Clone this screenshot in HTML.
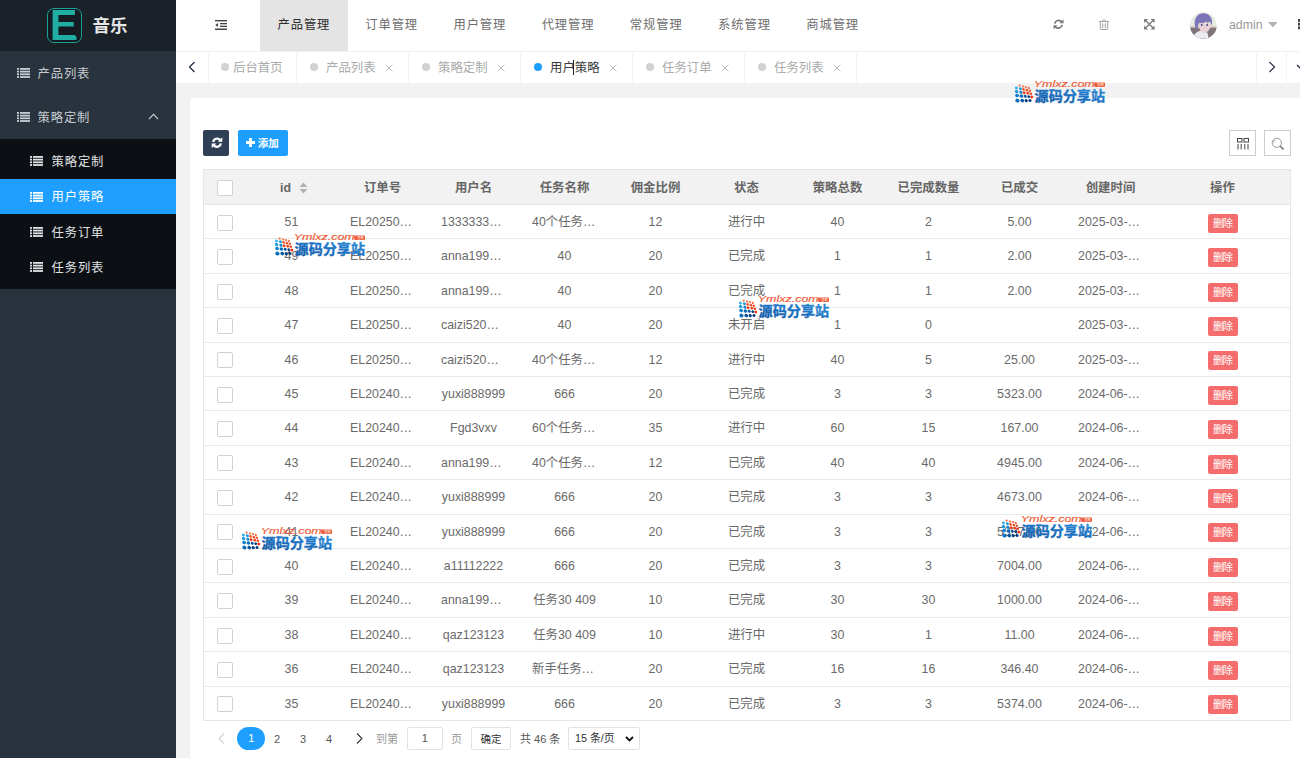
<!DOCTYPE html>
<html lang="zh-CN"><head><meta charset="utf-8"><title>音乐</title>
<style>
*{box-sizing:border-box;margin:0;padding:0}
html,body{width:1300px;height:758px;overflow:hidden;background:#f2f2f2;font-family:"Liberation Sans","Noto Sans CJK SC",sans-serif;font-size:12px;color:#666}
.abs{position:absolute}
#side{position:absolute;left:0;top:0;width:176px;height:758px;background:#28333e}
#logo{position:absolute;left:0;top:0;width:176px;height:51px;background:#1b2129}
#logo .e{position:absolute;left:47px;top:7.5px;width:35.2px;height:35.6px;border:1.2px solid #1aa094;border-radius:7px;background:#151b22}
#logo .t{position:absolute;left:92.5px;top:0;height:51px;line-height:52.5px;font-size:17.5px;font-weight:bold;color:#e6e6e6;letter-spacing:0}
.mi{position:absolute;left:0;width:176px;color:#c8cdd2;font-size:12.3px;letter-spacing:0.9px}
.mi .ic{position:absolute;top:50%;margin-top:-5px}
.mi span{position:absolute;top:0}
#sub{position:absolute;left:0;top:139px;width:176px;height:150px;background:#0c0f13}
#hdr{position:absolute;left:176px;top:0;width:1124px;height:52px;background:#fff;border-bottom:1px solid #f0f0f0}
.nav{position:absolute;top:0;height:51px;line-height:50px;width:88px;text-align:center;font-size:12.3px;letter-spacing:0.9px;text-indent:0.9px;color:#6e6e6e}
.nav.on{background:#e4e4e4;color:#2c2c2c;width:88.3px;text-indent:0.2px}
#tabs{position:absolute;left:176px;top:51px;width:1124px;height:32px;background:#fff;border-top:1px solid #f0f0f0}
.tab{position:absolute;top:-1px;height:32px;line-height:35px;border-right:1px solid #f4f4f4;color:#aaa;font-size:12.4px}
.tab .d{position:absolute;top:12.3px;width:8px;height:8px;border-radius:50%;background:#d2d2d2}
.tab .x{position:absolute;top:0;font-size:13px;color:#bbb}
#card{position:absolute;left:190px;top:98px;width:1120px;height:670px;background:#fff;border-radius:3px}
#tbl{position:absolute;left:203px;top:169px;width:1088px;height:552px;border:1px solid #e6e6e6;background:#fff}
#th{position:absolute;left:0;top:0;width:1086px;height:35px;background:#f2f2f2;border-bottom:1px solid #e6e6e6}
.c{position:absolute;width:91px;text-align:center;white-space:nowrap;font-size:12.4px;color:#6a6a6a}
.h{font-weight:bold;color:#666}
.cb{position:absolute;left:217px;width:16px;height:16px;border:1px solid #d2d2d2;border-radius:2px;background:#fff}
.ln{position:absolute;left:204px;width:1086px;height:1px;background:#e9e9e9}
.del{position:absolute;left:1208px;width:30px;height:19px;background:#f56c6c;border-radius:2px;color:#fff;font-size:10.5px;line-height:19px;text-align:center;letter-spacing:-1px;text-indent:-1px}
.wm{position:absolute;width:94px;height:26px}
</style></head><body>
<div id="side"><div id="logo"><div class="e"><svg width="33" height="33" viewBox="0 0 33 33" style="position:absolute;left:0.3px;top:0.3px"><path d="M4.6 1h22.3v5h-16.5v6.9h15.3v4.6h-15.3v8.5h16.5l1.6 2v3h-23.9z" fill="#20aea3"/></svg></div><div class="t">音乐</div></div><div class="mi" style="top:51px;height:44px;line-height:47px"><svg class="ic" style="left:17px" width="13" height="10" viewBox="0 0 13 10"><g fill="#c8cdd2"><rect x="0" y="0" width="2" height="1.8"/><rect x="3" y="0" width="10" height="1.8"/><rect x="0" y="2.7" width="2" height="1.8"/><rect x="3" y="2.7" width="10" height="1.8"/><rect x="0" y="5.4" width="2" height="1.8"/><rect x="3" y="5.4" width="10" height="1.8"/><rect x="0" y="8.1" width="2" height="1.8"/><rect x="3" y="8.1" width="10" height="1.8"/></g></svg><span style="left:37.5px">产品列表</span></div><div class="mi" style="top:95px;height:44px;line-height:47px"><svg class="ic" style="left:17px" width="13" height="10" viewBox="0 0 13 10"><g fill="#c8cdd2"><rect x="0" y="0" width="2" height="1.8"/><rect x="3" y="0" width="10" height="1.8"/><rect x="0" y="2.7" width="2" height="1.8"/><rect x="3" y="2.7" width="10" height="1.8"/><rect x="0" y="5.4" width="2" height="1.8"/><rect x="3" y="5.4" width="10" height="1.8"/><rect x="0" y="8.1" width="2" height="1.8"/><rect x="3" y="8.1" width="10" height="1.8"/></g></svg><span style="left:37.5px">策略定制</span><svg style="position:absolute;left:148px;top:18px" width="11" height="7" viewBox="0 0 11 7"><path d="M1 6L5.5 1.3 10 6" fill="none" stroke="#c8cdd2" stroke-width="1.1"/></svg></div><div id="sub"></div><div class="mi" style="top:143.7px;height:35.3px;line-height:37.4px;color:#e0e3e6;"><svg class="ic" style="left:30px" width="13" height="10" viewBox="0 0 13 10"><g fill="#e0e3e6"><rect x="0" y="0" width="2" height="1.8"/><rect x="3" y="0" width="10" height="1.8"/><rect x="0" y="2.7" width="2" height="1.8"/><rect x="3" y="2.7" width="10" height="1.8"/><rect x="0" y="5.4" width="2" height="1.8"/><rect x="3" y="5.4" width="10" height="1.8"/><rect x="0" y="8.1" width="2" height="1.8"/><rect x="3" y="8.1" width="10" height="1.8"/></g></svg><span style="left:51.5px;top:0px">策略定制</span></div><div class="mi" style="top:179px;height:35.3px;line-height:37.4px;background:#1e9fff;color:#fff;"><svg class="ic" style="left:30px" width="13" height="10" viewBox="0 0 13 10"><g fill="#fff"><rect x="0" y="0" width="2" height="1.8"/><rect x="3" y="0" width="10" height="1.8"/><rect x="0" y="2.7" width="2" height="1.8"/><rect x="3" y="2.7" width="10" height="1.8"/><rect x="0" y="5.4" width="2" height="1.8"/><rect x="3" y="5.4" width="10" height="1.8"/><rect x="0" y="8.1" width="2" height="1.8"/><rect x="3" y="8.1" width="10" height="1.8"/></g></svg><span style="left:51.5px;top:0.2px">用户策略</span></div><div class="mi" style="top:214.3px;height:35.3px;line-height:37.4px;color:#e0e3e6;"><svg class="ic" style="left:30px" width="13" height="10" viewBox="0 0 13 10"><g fill="#e0e3e6"><rect x="0" y="0" width="2" height="1.8"/><rect x="3" y="0" width="10" height="1.8"/><rect x="0" y="2.7" width="2" height="1.8"/><rect x="3" y="2.7" width="10" height="1.8"/><rect x="0" y="5.4" width="2" height="1.8"/><rect x="3" y="5.4" width="10" height="1.8"/><rect x="0" y="8.1" width="2" height="1.8"/><rect x="3" y="8.1" width="10" height="1.8"/></g></svg><span style="left:51.5px;top:0.6px">任务订单</span></div><div class="mi" style="top:249.6px;height:35.3px;line-height:37.4px;color:#e0e3e6;"><svg class="ic" style="left:30px" width="13" height="10" viewBox="0 0 13 10"><g fill="#e0e3e6"><rect x="0" y="0" width="2" height="1.8"/><rect x="3" y="0" width="10" height="1.8"/><rect x="0" y="2.7" width="2" height="1.8"/><rect x="3" y="2.7" width="10" height="1.8"/><rect x="0" y="5.4" width="2" height="1.8"/><rect x="3" y="5.4" width="10" height="1.8"/><rect x="0" y="8.1" width="2" height="1.8"/><rect x="3" y="8.1" width="10" height="1.8"/></g></svg><span style="left:51.5px;top:0.4px">任务列表</span></div></div><div id="hdr"><svg class="abs" style="left:38.5px;top:20px" width="12.5" height="10" viewBox="0 0 12.5 10"><g fill="#444"><rect x="0" y="0" width="12.5" height="1.4"/><rect x="5" y="3" width="7.5" height="1.3"/><rect x="5" y="5.7" width="7.5" height="1.3"/><rect x="0" y="8.5" width="12.5" height="1.5"/><path d="M3 3v4L0.3 5z"/></g></svg><div class="nav on" style="left:83.69999999999999px">产品管理</div><div class="nav" style="left:171.2px">订单管理</div><div class="nav" style="left:259.4px">用户管理</div><div class="nav" style="left:347.6px">代理管理</div><div class="nav" style="left:435.79999999999995px">常规管理</div><div class="nav" style="left:524.0px">系统管理</div><div class="nav" style="left:612.2px">商城管理</div><svg class="abs" style="left:877px;top:19.3px" width="11" height="10.5" viewBox="0 0 14 13.3"><g fill="none" stroke="#777" stroke-width="2.1"><path d="M2.3 5.8A4.9 4.9 0 0 1 11 3.6"/><path d="M11.7 7.5A4.9 4.9 0 0 1 3 9.7"/></g><path d="M13.4 0.3v5.2H8.2z" fill="#777"/><path d="M0.6 13V7.8h5.2z" fill="#777"/></svg><svg class="abs" style="left:923px;top:19px" width="10" height="11" viewBox="0 0 10 11"><g fill="none" stroke="#999" stroke-width="0.9"><path d="M0 2.5h10M3.2 2.3C3.2 0.3 6.8 0.3 6.8 2.3M1.3 2.7v7.1q0 0.7 0.7 0.7h6q0.7 0 0.7-0.7V2.7"/><path d="M3.7 4.5v4.3M6.3 4.5v4.3" stroke-width="1"/></g></svg><svg class="abs" style="left:968px;top:19.3px" width="10.7" height="10.5" viewBox="0 0 11 11"><g fill="#777"><path d="M0 0h4.2L0 4.2zM11 0v4.2L6.8 0zM0 11V6.8L4.2 11zM11 11H6.8L11 6.8z"/></g><path d="M1.5 1.5l8 8M9.5 1.5l-8 8" stroke="#808080" stroke-width="1.5" fill="none"/></svg><svg class="abs" style="left:1014.1px;top:12px" width="26.8" height="26.8" viewBox="0 0 27 27"><defs><clipPath id="av"><circle cx="13.5" cy="13.5" r="13.5"/></clipPath></defs><g clip-path="url(#av)"><rect width="27" height="27" fill="#e6ebe2"/><rect x="0" y="15.5" width="27" height="12" fill="#7f7479"/><rect x="0" y="14.6" width="27" height="1.2" fill="#c9b9a6"/><path d="M3 27C4 21 8 19.5 11 19l6 1.5c1.5 2 1.5 4 1.2 6.5z" fill="#ecebf2"/><path d="M8.5 11c0 5 2 9.5 6 10.2 3.5-0.5 6.5-4 6.5-10z" fill="#e8d2d8"/><path d="M5 14C3.5 6 8 1.2 13.5 1.2S23.5 5 22 13.5c-0.8-1.5-1.5-3-2-4-1 1-2 1.5-3 1.5l-0.5-1.5c-2 1.5-5 2-7.5 1.5-0.5 2-1.5 4.5-2 6.5-1-0.5-1.8-1.8-2-3.5z" fill="#7c75b8"/><ellipse cx="11.8" cy="13" rx="0.9" ry="1.2" fill="#5a548f"/><ellipse cx="17.3" cy="13" rx="0.9" ry="1.2" fill="#5a548f"/></g></svg><div class="abs" style="left:1053px;top:0;height:51px;line-height:51px;font-size:12.3px;color:#999">admin</div><svg class="abs" style="left:1091.7px;top:22px" width="9.7" height="5.4" viewBox="0 0 10 5.5"><path d="M0 0h10L5 5.5z" fill="#b2b2b2"/></svg><svg class="abs" style="left:1121.7px;top:19px" width="4" height="12" viewBox="0 0 4 12"><g fill="#444"><rect x="0" y="0" width="4" height="2.8"/><rect x="0" y="3.7" width="4" height="2.8"/><rect x="0" y="7.4" width="4" height="2.8"/></g></svg></div><div id="tabs"><div class="abs" style="left:0;top:-1px;width:32.5px;height:32px;border-right:1px solid #f4f4f4"></div><svg class="abs" style="left:12px;top:9px" width="8" height="12" viewBox="0 0 8 12"><path d="M6.5 1L1.5 6l5 5" fill="none" stroke="#1c2540" stroke-width="1.2"/></svg><div class="tab" style="left:32px;width:88.5px"><i class="d" style="left:13px"></i><span class="abs" style="left:25px">后台首页</span></div><div class="tab" style="left:120px;width:112.5px;"><i class="d" style="left:14px;"></i><span class="abs" style="left:30px">产品列表</span><svg class="abs" style="left:88.5px;top:13px" width="8" height="8" viewBox="0 0 8 8"><path d="M0.7 0.7l6.6 6.6M7.3 0.7L0.7 7.3" stroke="#bbb" stroke-width="0.9" fill="none"/></svg></div><div class="tab" style="left:232px;width:112.5px;"><i class="d" style="left:14px;"></i><span class="abs" style="left:30px">策略定制</span><svg class="abs" style="left:88.5px;top:13px" width="8" height="8" viewBox="0 0 8 8"><path d="M0.7 0.7l6.6 6.6M7.3 0.7L0.7 7.3" stroke="#bbb" stroke-width="0.9" fill="none"/></svg></div><div class="tab" style="left:344px;width:112.5px;color:#3a3a3a;"><i class="d" style="left:14px;background:#1e9fff;"></i><span class="abs" style="left:30px">用户策略</span><svg class="abs" style="left:88.5px;top:13px" width="8" height="8" viewBox="0 0 8 8"><path d="M0.7 0.7l6.6 6.6M7.3 0.7L0.7 7.3" stroke="#bbb" stroke-width="0.9" fill="none"/></svg></div><div class="tab" style="left:456px;width:112.5px;"><i class="d" style="left:14px;"></i><span class="abs" style="left:30px">任务订单</span><svg class="abs" style="left:88.5px;top:13px" width="8" height="8" viewBox="0 0 8 8"><path d="M0.7 0.7l6.6 6.6M7.3 0.7L0.7 7.3" stroke="#bbb" stroke-width="0.9" fill="none"/></svg></div><div class="tab" style="left:568px;width:112.5px;"><i class="d" style="left:14px;"></i><span class="abs" style="left:30px">任务列表</span><svg class="abs" style="left:88.5px;top:13px" width="8" height="8" viewBox="0 0 8 8"><path d="M0.7 0.7l6.6 6.6M7.3 0.7L0.7 7.3" stroke="#bbb" stroke-width="0.9" fill="none"/></svg></div><div class="abs" style="left:397.4px;top:8px;width:1px;height:15px;background:#222"></div><div class="abs" style="left:1079.7px;top:-1px;width:31.8px;height:32px;border-left:1px solid #f4f4f4;border-right:1px solid #f4f4f4"></div><svg class="abs" style="left:1092px;top:9px" width="8" height="12" viewBox="0 0 8 12"><path d="M1.5 1l5 5-5 5" fill="none" stroke="#1c2540" stroke-width="1.2"/></svg><svg class="abs" style="left:1120px;top:12px" width="10" height="7" viewBox="0 0 10 7"><path d="M1 1l4.5 4.5L10 1" fill="none" stroke="#1c2540" stroke-width="1.2"/></svg></div><div id="card"></div><div class="abs" style="left:203px;top:130px;width:26px;height:26px;background:#2f4056;border-radius:2px"><svg class="abs" style="left:7.7px;top:7px" width="12" height="11.4" viewBox="0 0 14 13.3"><g fill="none" stroke="#fff" stroke-width="2.6"><path d="M2.5 5.8A4.7 4.7 0 0 1 10.8 3.6"/><path d="M11.5 7.5A4.7 4.7 0 0 1 3.2 9.7"/></g><path d="M13.2 0.2v5.4H7.8z" fill="#fff"/><path d="M0.8 13.1V7.7h5.4z" fill="#fff"/></svg></div><div class="abs" style="left:237.5px;top:130px;width:50.3px;height:26px;background:#1e9fff;border-radius:2px;color:#fff;font-size:10.5px;line-height:25px;font-weight:bold"><svg class="abs" style="left:8.4px;top:8.1px" width="9" height="9" viewBox="0 0 9 9"><path d="M3.1 0h2.8v3.1H9v2.8H5.9V9H3.1V5.9H0V3.1h3.1z" fill="#fff"/></svg><span class="abs" style="left:20.3px;top:0.5px">添加</span></div><div class="abs" style="left:1229px;top:130px;width:26.5px;height:26px;border:1px solid #ccc;background:#fff"><svg class="abs" style="left:7px;top:6.5px" width="12" height="12" viewBox="0 0 12 12"><g fill="none" stroke="#444" stroke-width="1"><rect x="0.5" y="0.5" width="4.5" height="3.5"/><rect x="7" y="0.5" width="4.5" height="3.5"/><path d="M1 6v5.5M4.2 6v5.5M7.8 6v5.5M11 6v5.5"/></g></svg></div><div class="abs" style="left:1264.3px;top:130px;width:26.5px;height:26px;border:1px solid #ccc;background:#fff"><svg class="abs" style="left:6px;top:6px" width="14" height="14" viewBox="0 0 14 14"><g fill="none" stroke="#999" stroke-width="1"><circle cx="5.8" cy="5.8" r="4.6"/><path d="M2.6 5.8a3.2 3.2 0 0 1 1.5-2.7" stroke-width="0.8"/><path d="M9.2 9.2l3.3 3.3" stroke-width="1.8" stroke="#888"/></g></svg></div><div id="tbl"><div id="th"></div></div><div class="cb" style="top:180px"></div><div class="c h" style="left:240.0px;top:170.5px;height:35px;line-height:35px">id</div><svg class="abs" style="left:299px;top:182px" width="9" height="12" viewBox="0 0 9 12"><path d="M0.5 5L4.5 0.5 8.5 5z" fill="#b2b2b2"/><path d="M0.5 7L4.5 11.5 8.5 7z" fill="#b2b2b2"/></svg><div class="c h" style="left:337.0px;top:170.5px;height:35px;line-height:35px">订单号</div><div class="c h" style="left:428.0px;top:170.5px;height:35px;line-height:35px">用户名</div><div class="c h" style="left:519.0px;top:170.5px;height:35px;line-height:35px">任务名称</div><div class="c h" style="left:610.0px;top:170.5px;height:35px;line-height:35px">佣金比例</div><div class="c h" style="left:701.0px;top:170.5px;height:35px;line-height:35px">状态</div><div class="c h" style="left:792.0px;top:170.5px;height:35px;line-height:35px">策略总数</div><div class="c h" style="left:883.0px;top:170.5px;height:35px;line-height:35px">已完成数量</div><div class="c h" style="left:974.0px;top:170.5px;height:35px;line-height:35px">已成交</div><div class="c h" style="left:1065.0px;top:170.5px;height:35px;line-height:35px">创建时间</div><div class="c h" style="left:1177.0px;top:170.5px;height:35px;line-height:35px">操作</div><div class="cb" style="top:215px"></div><div class="c" style="left:246.0px;top:204.95px;height:34.4px;line-height:34.4px">51</div><div class="c" style="left:350.0px;text-align:left;top:204.95px;height:34.4px;line-height:34.4px">EL20250…</div><div class="c" style="left:441.0px;text-align:left;top:204.95px;height:34.4px;line-height:34.4px">1333333…</div><div class="c" style="left:532.0px;text-align:left;top:204.95px;height:34.4px;line-height:34.4px">40个任务…</div><div class="c" style="left:610.0px;top:204.95px;height:34.4px;line-height:34.4px">12</div><div class="c" style="left:701.0px;top:204.95px;height:34.4px;line-height:34.4px">进行中</div><div class="c" style="left:792.0px;top:204.95px;height:34.4px;line-height:34.4px">40</div><div class="c" style="left:883.0px;top:204.95px;height:34.4px;line-height:34.4px">2</div><div class="c" style="left:974.0px;top:204.95px;height:34.4px;line-height:34.4px">5.00</div><div class="c" style="left:1078.0px;text-align:left;top:204.95px;height:34.4px;line-height:34.4px">2025-03-…</div><div class="del" style="top:213.8px">删除</div><div class="ln" style="top:238px"></div><div class="cb" style="top:249px"></div><div class="c" style="left:246.0px;top:239.35px;height:34.4px;line-height:34.4px">49</div><div class="c" style="left:350.0px;text-align:left;top:239.35px;height:34.4px;line-height:34.4px">EL20250…</div><div class="c" style="left:441.0px;text-align:left;top:239.35px;height:34.4px;line-height:34.4px">anna199…</div><div class="c" style="left:519.0px;top:239.35px;height:34.4px;line-height:34.4px">40</div><div class="c" style="left:610.0px;top:239.35px;height:34.4px;line-height:34.4px">20</div><div class="c" style="left:701.0px;top:239.35px;height:34.4px;line-height:34.4px">已完成</div><div class="c" style="left:792.0px;top:239.35px;height:34.4px;line-height:34.4px">1</div><div class="c" style="left:883.0px;top:239.35px;height:34.4px;line-height:34.4px">1</div><div class="c" style="left:974.0px;top:239.35px;height:34.4px;line-height:34.4px">2.00</div><div class="c" style="left:1078.0px;text-align:left;top:239.35px;height:34.4px;line-height:34.4px">2025-03-…</div><div class="del" style="top:248.2px">删除</div><div class="ln" style="top:273px"></div><div class="cb" style="top:284px"></div><div class="c" style="left:246.0px;top:273.75px;height:34.4px;line-height:34.4px">48</div><div class="c" style="left:350.0px;text-align:left;top:273.75px;height:34.4px;line-height:34.4px">EL20250…</div><div class="c" style="left:441.0px;text-align:left;top:273.75px;height:34.4px;line-height:34.4px">anna199…</div><div class="c" style="left:519.0px;top:273.75px;height:34.4px;line-height:34.4px">40</div><div class="c" style="left:610.0px;top:273.75px;height:34.4px;line-height:34.4px">20</div><div class="c" style="left:701.0px;top:273.75px;height:34.4px;line-height:34.4px">已完成</div><div class="c" style="left:792.0px;top:273.75px;height:34.4px;line-height:34.4px">1</div><div class="c" style="left:883.0px;top:273.75px;height:34.4px;line-height:34.4px">1</div><div class="c" style="left:974.0px;top:273.75px;height:34.4px;line-height:34.4px">2.00</div><div class="c" style="left:1078.0px;text-align:left;top:273.75px;height:34.4px;line-height:34.4px">2025-03-…</div><div class="del" style="top:282.6px">删除</div><div class="ln" style="top:307px"></div><div class="cb" style="top:318px"></div><div class="c" style="left:246.0px;top:308.15px;height:34.4px;line-height:34.4px">47</div><div class="c" style="left:350.0px;text-align:left;top:308.15px;height:34.4px;line-height:34.4px">EL20250…</div><div class="c" style="left:441.0px;text-align:left;top:308.15px;height:34.4px;line-height:34.4px">caizi520…</div><div class="c" style="left:519.0px;top:308.15px;height:34.4px;line-height:34.4px">40</div><div class="c" style="left:610.0px;top:308.15px;height:34.4px;line-height:34.4px">20</div><div class="c" style="left:701.0px;top:308.15px;height:34.4px;line-height:34.4px">未开启</div><div class="c" style="left:792.0px;top:308.15px;height:34.4px;line-height:34.4px">1</div><div class="c" style="left:883.0px;top:308.15px;height:34.4px;line-height:34.4px">0</div><div class="c" style="left:1078.0px;text-align:left;top:308.15px;height:34.4px;line-height:34.4px">2025-03-…</div><div class="del" style="top:317.0px">删除</div><div class="ln" style="top:342px"></div><div class="cb" style="top:352px"></div><div class="c" style="left:246.0px;top:342.55px;height:34.4px;line-height:34.4px">46</div><div class="c" style="left:350.0px;text-align:left;top:342.55px;height:34.4px;line-height:34.4px">EL20250…</div><div class="c" style="left:441.0px;text-align:left;top:342.55px;height:34.4px;line-height:34.4px">caizi520…</div><div class="c" style="left:532.0px;text-align:left;top:342.55px;height:34.4px;line-height:34.4px">40个任务…</div><div class="c" style="left:610.0px;top:342.55px;height:34.4px;line-height:34.4px">12</div><div class="c" style="left:701.0px;top:342.55px;height:34.4px;line-height:34.4px">进行中</div><div class="c" style="left:792.0px;top:342.55px;height:34.4px;line-height:34.4px">40</div><div class="c" style="left:883.0px;top:342.55px;height:34.4px;line-height:34.4px">5</div><div class="c" style="left:974.0px;top:342.55px;height:34.4px;line-height:34.4px">25.00</div><div class="c" style="left:1078.0px;text-align:left;top:342.55px;height:34.4px;line-height:34.4px">2025-03-…</div><div class="del" style="top:351.4px">删除</div><div class="ln" style="top:376px"></div><div class="cb" style="top:387px"></div><div class="c" style="left:246.0px;top:376.95px;height:34.4px;line-height:34.4px">45</div><div class="c" style="left:350.0px;text-align:left;top:376.95px;height:34.4px;line-height:34.4px">EL20240…</div><div class="c" style="left:428.0px;top:376.95px;height:34.4px;line-height:34.4px">yuxi888999</div><div class="c" style="left:519.0px;top:376.95px;height:34.4px;line-height:34.4px">666</div><div class="c" style="left:610.0px;top:376.95px;height:34.4px;line-height:34.4px">20</div><div class="c" style="left:701.0px;top:376.95px;height:34.4px;line-height:34.4px">已完成</div><div class="c" style="left:792.0px;top:376.95px;height:34.4px;line-height:34.4px">3</div><div class="c" style="left:883.0px;top:376.95px;height:34.4px;line-height:34.4px">3</div><div class="c" style="left:974.0px;top:376.95px;height:34.4px;line-height:34.4px">5323.00</div><div class="c" style="left:1078.0px;text-align:left;top:376.95px;height:34.4px;line-height:34.4px">2024-06-…</div><div class="del" style="top:385.8px">删除</div><div class="ln" style="top:410px"></div><div class="cb" style="top:421px"></div><div class="c" style="left:246.0px;top:411.35px;height:34.4px;line-height:34.4px">44</div><div class="c" style="left:350.0px;text-align:left;top:411.35px;height:34.4px;line-height:34.4px">EL20240…</div><div class="c" style="left:428.0px;top:411.35px;height:34.4px;line-height:34.4px">Fgd3vxv</div><div class="c" style="left:532.0px;text-align:left;top:411.35px;height:34.4px;line-height:34.4px">60个任务…</div><div class="c" style="left:610.0px;top:411.35px;height:34.4px;line-height:34.4px">35</div><div class="c" style="left:701.0px;top:411.35px;height:34.4px;line-height:34.4px">进行中</div><div class="c" style="left:792.0px;top:411.35px;height:34.4px;line-height:34.4px">60</div><div class="c" style="left:883.0px;top:411.35px;height:34.4px;line-height:34.4px">15</div><div class="c" style="left:974.0px;top:411.35px;height:34.4px;line-height:34.4px">167.00</div><div class="c" style="left:1078.0px;text-align:left;top:411.35px;height:34.4px;line-height:34.4px">2024-06-…</div><div class="del" style="top:420.2px">删除</div><div class="ln" style="top:445px"></div><div class="cb" style="top:455px"></div><div class="c" style="left:246.0px;top:445.75px;height:34.4px;line-height:34.4px">43</div><div class="c" style="left:350.0px;text-align:left;top:445.75px;height:34.4px;line-height:34.4px">EL20240…</div><div class="c" style="left:441.0px;text-align:left;top:445.75px;height:34.4px;line-height:34.4px">anna199…</div><div class="c" style="left:532.0px;text-align:left;top:445.75px;height:34.4px;line-height:34.4px">40个任务…</div><div class="c" style="left:610.0px;top:445.75px;height:34.4px;line-height:34.4px">12</div><div class="c" style="left:701.0px;top:445.75px;height:34.4px;line-height:34.4px">已完成</div><div class="c" style="left:792.0px;top:445.75px;height:34.4px;line-height:34.4px">40</div><div class="c" style="left:883.0px;top:445.75px;height:34.4px;line-height:34.4px">40</div><div class="c" style="left:974.0px;top:445.75px;height:34.4px;line-height:34.4px">4945.00</div><div class="c" style="left:1078.0px;text-align:left;top:445.75px;height:34.4px;line-height:34.4px">2024-06-…</div><div class="del" style="top:454.6px">删除</div><div class="ln" style="top:479px"></div><div class="cb" style="top:490px"></div><div class="c" style="left:246.0px;top:480.15px;height:34.4px;line-height:34.4px">42</div><div class="c" style="left:350.0px;text-align:left;top:480.15px;height:34.4px;line-height:34.4px">EL20240…</div><div class="c" style="left:428.0px;top:480.15px;height:34.4px;line-height:34.4px">yuxi888999</div><div class="c" style="left:519.0px;top:480.15px;height:34.4px;line-height:34.4px">666</div><div class="c" style="left:610.0px;top:480.15px;height:34.4px;line-height:34.4px">20</div><div class="c" style="left:701.0px;top:480.15px;height:34.4px;line-height:34.4px">已完成</div><div class="c" style="left:792.0px;top:480.15px;height:34.4px;line-height:34.4px">3</div><div class="c" style="left:883.0px;top:480.15px;height:34.4px;line-height:34.4px">3</div><div class="c" style="left:974.0px;top:480.15px;height:34.4px;line-height:34.4px">4673.00</div><div class="c" style="left:1078.0px;text-align:left;top:480.15px;height:34.4px;line-height:34.4px">2024-06-…</div><div class="del" style="top:489.0px">删除</div><div class="ln" style="top:514px"></div><div class="cb" style="top:524px"></div><div class="c" style="left:246.0px;top:514.55px;height:34.4px;line-height:34.4px">41</div><div class="c" style="left:350.0px;text-align:left;top:514.55px;height:34.4px;line-height:34.4px">EL20240…</div><div class="c" style="left:428.0px;top:514.55px;height:34.4px;line-height:34.4px">yuxi888999</div><div class="c" style="left:519.0px;top:514.55px;height:34.4px;line-height:34.4px">666</div><div class="c" style="left:610.0px;top:514.55px;height:34.4px;line-height:34.4px">20</div><div class="c" style="left:701.0px;top:514.55px;height:34.4px;line-height:34.4px">已完成</div><div class="c" style="left:792.0px;top:514.55px;height:34.4px;line-height:34.4px">3</div><div class="c" style="left:883.0px;top:514.55px;height:34.4px;line-height:34.4px">3</div><div class="c" style="left:974.0px;top:514.55px;height:34.4px;line-height:34.4px">5337.00</div><div class="c" style="left:1078.0px;text-align:left;top:514.55px;height:34.4px;line-height:34.4px">2024-06-…</div><div class="del" style="top:523.4px">删除</div><div class="ln" style="top:548px"></div><div class="cb" style="top:559px"></div><div class="c" style="left:246.0px;top:548.95px;height:34.4px;line-height:34.4px">40</div><div class="c" style="left:350.0px;text-align:left;top:548.95px;height:34.4px;line-height:34.4px">EL20240…</div><div class="c" style="left:428.0px;top:548.95px;height:34.4px;line-height:34.4px">a11112222</div><div class="c" style="left:519.0px;top:548.95px;height:34.4px;line-height:34.4px">666</div><div class="c" style="left:610.0px;top:548.95px;height:34.4px;line-height:34.4px">20</div><div class="c" style="left:701.0px;top:548.95px;height:34.4px;line-height:34.4px">已完成</div><div class="c" style="left:792.0px;top:548.95px;height:34.4px;line-height:34.4px">3</div><div class="c" style="left:883.0px;top:548.95px;height:34.4px;line-height:34.4px">3</div><div class="c" style="left:974.0px;top:548.95px;height:34.4px;line-height:34.4px">7004.00</div><div class="c" style="left:1078.0px;text-align:left;top:548.95px;height:34.4px;line-height:34.4px">2024-06-…</div><div class="del" style="top:557.8px">删除</div><div class="ln" style="top:582px"></div><div class="cb" style="top:593px"></div><div class="c" style="left:246.0px;top:583.35px;height:34.4px;line-height:34.4px">39</div><div class="c" style="left:350.0px;text-align:left;top:583.35px;height:34.4px;line-height:34.4px">EL20240…</div><div class="c" style="left:441.0px;text-align:left;top:583.35px;height:34.4px;line-height:34.4px">anna199…</div><div class="c" style="left:519.0px;top:583.35px;height:34.4px;line-height:34.4px">任务30 409</div><div class="c" style="left:610.0px;top:583.35px;height:34.4px;line-height:34.4px">10</div><div class="c" style="left:701.0px;top:583.35px;height:34.4px;line-height:34.4px">已完成</div><div class="c" style="left:792.0px;top:583.35px;height:34.4px;line-height:34.4px">30</div><div class="c" style="left:883.0px;top:583.35px;height:34.4px;line-height:34.4px">30</div><div class="c" style="left:974.0px;top:583.35px;height:34.4px;line-height:34.4px">1000.00</div><div class="c" style="left:1078.0px;text-align:left;top:583.35px;height:34.4px;line-height:34.4px">2024-06-…</div><div class="del" style="top:592.2px">删除</div><div class="ln" style="top:617px"></div><div class="cb" style="top:628px"></div><div class="c" style="left:246.0px;top:617.75px;height:34.4px;line-height:34.4px">38</div><div class="c" style="left:350.0px;text-align:left;top:617.75px;height:34.4px;line-height:34.4px">EL20240…</div><div class="c" style="left:428.0px;top:617.75px;height:34.4px;line-height:34.4px">qaz123123</div><div class="c" style="left:519.0px;top:617.75px;height:34.4px;line-height:34.4px">任务30 409</div><div class="c" style="left:610.0px;top:617.75px;height:34.4px;line-height:34.4px">10</div><div class="c" style="left:701.0px;top:617.75px;height:34.4px;line-height:34.4px">进行中</div><div class="c" style="left:792.0px;top:617.75px;height:34.4px;line-height:34.4px">30</div><div class="c" style="left:883.0px;top:617.75px;height:34.4px;line-height:34.4px">1</div><div class="c" style="left:974.0px;top:617.75px;height:34.4px;line-height:34.4px">11.00</div><div class="c" style="left:1078.0px;text-align:left;top:617.75px;height:34.4px;line-height:34.4px">2024-06-…</div><div class="del" style="top:626.6px">删除</div><div class="ln" style="top:651px"></div><div class="cb" style="top:662px"></div><div class="c" style="left:246.0px;top:652.15px;height:34.4px;line-height:34.4px">36</div><div class="c" style="left:350.0px;text-align:left;top:652.15px;height:34.4px;line-height:34.4px">EL20240…</div><div class="c" style="left:428.0px;top:652.15px;height:34.4px;line-height:34.4px">qaz123123</div><div class="c" style="left:532.0px;text-align:left;top:652.15px;height:34.4px;line-height:34.4px">新手任务…</div><div class="c" style="left:610.0px;top:652.15px;height:34.4px;line-height:34.4px">20</div><div class="c" style="left:701.0px;top:652.15px;height:34.4px;line-height:34.4px">已完成</div><div class="c" style="left:792.0px;top:652.15px;height:34.4px;line-height:34.4px">16</div><div class="c" style="left:883.0px;top:652.15px;height:34.4px;line-height:34.4px">16</div><div class="c" style="left:974.0px;top:652.15px;height:34.4px;line-height:34.4px">346.40</div><div class="c" style="left:1078.0px;text-align:left;top:652.15px;height:34.4px;line-height:34.4px">2024-06-…</div><div class="del" style="top:661.0px">删除</div><div class="ln" style="top:686px"></div><div class="cb" style="top:696px"></div><div class="c" style="left:246.0px;top:686.55px;height:34.4px;line-height:34.4px">35</div><div class="c" style="left:350.0px;text-align:left;top:686.55px;height:34.4px;line-height:34.4px">EL20240…</div><div class="c" style="left:428.0px;top:686.55px;height:34.4px;line-height:34.4px">yuxi888999</div><div class="c" style="left:519.0px;top:686.55px;height:34.4px;line-height:34.4px">666</div><div class="c" style="left:610.0px;top:686.55px;height:34.4px;line-height:34.4px">20</div><div class="c" style="left:701.0px;top:686.55px;height:34.4px;line-height:34.4px">已完成</div><div class="c" style="left:792.0px;top:686.55px;height:34.4px;line-height:34.4px">3</div><div class="c" style="left:883.0px;top:686.55px;height:34.4px;line-height:34.4px">3</div><div class="c" style="left:974.0px;top:686.55px;height:34.4px;line-height:34.4px">5374.00</div><div class="c" style="left:1078.0px;text-align:left;top:686.55px;height:34.4px;line-height:34.4px">2024-06-…</div><div class="del" style="top:695.4px">删除</div><svg class="abs" style="left:217.5px;top:733px" width="7" height="11" viewBox="0 0 7 11"><path d="M6 0.5L1 5.5l5 5" fill="none" stroke="#d2d2d2" stroke-width="1.1"/></svg><div class="abs" style="left:237.3px;top:727px;width:27.8px;height:23px;border-radius:11.5px;background:#1e9fff;color:#fff;font-size:11px;line-height:23.5px;text-align:center">1</div><div class="abs" style="left:267px;top:727.5px;width:20px;height:22.5px;color:#555;font-size:11px;line-height:22.5px;text-align:center">2</div><div class="abs" style="left:293px;top:727.5px;width:20px;height:22.5px;color:#555;font-size:11px;line-height:22.5px;text-align:center">3</div><div class="abs" style="left:319px;top:727.5px;width:20px;height:22.5px;color:#555;font-size:11px;line-height:22.5px;text-align:center">4</div><svg class="abs" style="left:356px;top:733px" width="7" height="11" viewBox="0 0 7 11"><path d="M1 0.5l5 5-5 5" fill="none" stroke="#333" stroke-width="1.1"/></svg><div class="abs" style="left:376px;top:727.5px;height:22.5px;line-height:22.5px;font-size:11px;color:#999">到第</div><div class="abs" style="left:407px;top:727px;width:35.5px;height:22.8px;border:1px solid #e2e2e2;border-radius:2px;background:#fff;text-align:center;line-height:21px;font-size:11px;color:#555">1</div><div class="abs" style="left:451px;top:727.5px;height:22.5px;line-height:22.5px;font-size:11px;color:#999">页</div><div class="abs" style="left:471px;top:727px;width:40px;height:22.8px;border:1px solid #e2e2e2;border-radius:2px;background:#fff;text-align:center;line-height:23.5px;font-size:10.5px;color:#333">确定</div><div class="abs" style="left:520px;top:727.5px;height:22.5px;line-height:22.5px;font-size:11px;color:#555">共 46 条</div><div class="abs" style="left:567.5px;top:727px;width:72px;height:22.8px;border:1px solid #e2e2e2;border-radius:2px;background:#fff;line-height:21.5px;font-size:10.8px;color:#333;padding-left:6.5px">15 条/页<svg class="abs" style="left:56px;top:8px" width="9" height="6" viewBox="0 0 9 6"><path d="M1 1l3.5 3.5L8 1" fill="none" stroke="#111" stroke-width="1.8"/></svg></div><svg class="wm" style="left:1014px;top:80px" viewBox="0 0 94 26" width="94" height="26"><defs><linearGradient id="wg" x1="0" y1="1" x2="1" y2="0"><stop offset="0" stop-color="#0d57a3"/><stop offset="0.55" stop-color="#1c74c4"/><stop offset="1" stop-color="#2a8fd8"/></linearGradient></defs><ellipse cx="5.6" cy="5.6" rx="1.22" ry="1.08" transform="rotate(25 5.6 5.6)" fill="#f4794f"/><ellipse cx="9.05" cy="6.4" rx="1.22" ry="1.08" transform="rotate(25 9.05 6.4)" fill="#f4794f"/><ellipse cx="11.9" cy="7.1" rx="1.22" ry="1.08" transform="rotate(25 11.9 7.1)" fill="#f47e58"/><ellipse cx="14.8" cy="7.9" rx="1.22" ry="1.08" transform="rotate(25 14.8 7.9)" fill="#f27049"/><ellipse cx="2.45" cy="7.9" rx="1.59" ry="1.40" transform="rotate(25 2.45 7.9)" fill="#3cb0ea"/><ellipse cx="6.4" cy="8.75" rx="1.59" ry="1.40" transform="rotate(25 6.4 8.75)" fill="#1e9be3"/><ellipse cx="9.55" cy="9.4" rx="1.40" ry="1.24" transform="rotate(25 9.55 9.4)" fill="#f04f22"/><ellipse cx="12.85" cy="10.1" rx="1.34" ry="1.19" transform="rotate(25 12.85 10.1)" fill="#ee4a1f"/><ellipse cx="15.8" cy="10.7" rx="1.28" ry="1.13" transform="rotate(25 15.8 10.7)" fill="#ee4a22"/><ellipse cx="2.6" cy="11.55" rx="1.77" ry="1.57" transform="rotate(25 2.6 11.55)" fill="#1f9be0"/><ellipse cx="6.9" cy="12.2" rx="1.65" ry="1.46" transform="rotate(25 6.9 12.2)" fill="#1585d0"/><ellipse cx="10.2" cy="12.7" rx="1.52" ry="1.35" transform="rotate(25 10.2 12.7)" fill="#ee3f17"/><ellipse cx="13.8" cy="13.2" rx="1.46" ry="1.30" transform="rotate(25 13.8 13.2)" fill="#ee3f17"/><ellipse cx="16.8" cy="13.7" rx="1.34" ry="1.19" transform="rotate(25 16.8 13.7)" fill="#ee4520"/><ellipse cx="3.1" cy="15.5" rx="1.95" ry="1.73" transform="rotate(25 3.1 15.5)" fill="#0f7fcf"/><ellipse cx="7.4" cy="16.0" rx="1.77" ry="1.57" transform="rotate(25 7.4 16.0)" fill="#0a6cb8"/><ellipse cx="11.2" cy="16.3" rx="1.59" ry="1.40" transform="rotate(25 11.2 16.3)" fill="#0b559c"/><ellipse cx="14.8" cy="16.7" rx="1.46" ry="1.30" transform="rotate(25 14.8 16.7)" fill="#083f80"/><ellipse cx="17.8" cy="17.0" rx="1.46" ry="1.30" transform="rotate(25 17.8 17.0)" fill="#ee2a0c"/><ellipse cx="3.45" cy="20.6" rx="2.13" ry="1.89" transform="rotate(25 3.45 20.6)" fill="#0d6db8"/><ellipse cx="8.2" cy="20.6" rx="1.89" ry="1.67" transform="rotate(25 8.2 20.6)" fill="#07559c"/><ellipse cx="12.2" cy="20.6" rx="1.71" ry="1.51" transform="rotate(25 12.2 20.6)" fill="#063f80"/><ellipse cx="16.0" cy="20.6" rx="1.59" ry="1.40" transform="rotate(25 16.0 20.6)" fill="#05377a"/><text transform="translate(19.7 6.9) scale(1.33 1)" font-family="Liberation Sans, sans-serif" font-style="italic" font-size="9.4" fill="#ee5a34" stroke="#ee5a34" stroke-width="0.15">Ymlxz.com</text><rect x="80.2" y="2.6" width="10.8" height="4.3" rx="0.8" fill="#ee5a34"/><text x="83.3" y="6" font-family="Liberation Sans, Noto Sans CJK SC, sans-serif" font-size="3.2" fill="#fff">官网</text><text x="20.6" y="21.3" font-family="Liberation Sans, Noto Sans CJK SC, sans-serif" font-weight="bold" font-size="14.1" fill="url(#wg)" stroke="url(#wg)" stroke-width="0.35">源码分享站</text></svg><svg class="wm" style="left:274.2px;top:232.8px" viewBox="0 0 94 26" width="94" height="26"><ellipse cx="5.6" cy="5.6" rx="1.22" ry="1.08" transform="rotate(25 5.6 5.6)" fill="#f4794f"/><ellipse cx="9.05" cy="6.4" rx="1.22" ry="1.08" transform="rotate(25 9.05 6.4)" fill="#f4794f"/><ellipse cx="11.9" cy="7.1" rx="1.22" ry="1.08" transform="rotate(25 11.9 7.1)" fill="#f47e58"/><ellipse cx="14.8" cy="7.9" rx="1.22" ry="1.08" transform="rotate(25 14.8 7.9)" fill="#f27049"/><ellipse cx="2.45" cy="7.9" rx="1.59" ry="1.40" transform="rotate(25 2.45 7.9)" fill="#3cb0ea"/><ellipse cx="6.4" cy="8.75" rx="1.59" ry="1.40" transform="rotate(25 6.4 8.75)" fill="#1e9be3"/><ellipse cx="9.55" cy="9.4" rx="1.40" ry="1.24" transform="rotate(25 9.55 9.4)" fill="#f04f22"/><ellipse cx="12.85" cy="10.1" rx="1.34" ry="1.19" transform="rotate(25 12.85 10.1)" fill="#ee4a1f"/><ellipse cx="15.8" cy="10.7" rx="1.28" ry="1.13" transform="rotate(25 15.8 10.7)" fill="#ee4a22"/><ellipse cx="2.6" cy="11.55" rx="1.77" ry="1.57" transform="rotate(25 2.6 11.55)" fill="#1f9be0"/><ellipse cx="6.9" cy="12.2" rx="1.65" ry="1.46" transform="rotate(25 6.9 12.2)" fill="#1585d0"/><ellipse cx="10.2" cy="12.7" rx="1.52" ry="1.35" transform="rotate(25 10.2 12.7)" fill="#ee3f17"/><ellipse cx="13.8" cy="13.2" rx="1.46" ry="1.30" transform="rotate(25 13.8 13.2)" fill="#ee3f17"/><ellipse cx="16.8" cy="13.7" rx="1.34" ry="1.19" transform="rotate(25 16.8 13.7)" fill="#ee4520"/><ellipse cx="3.1" cy="15.5" rx="1.95" ry="1.73" transform="rotate(25 3.1 15.5)" fill="#0f7fcf"/><ellipse cx="7.4" cy="16.0" rx="1.77" ry="1.57" transform="rotate(25 7.4 16.0)" fill="#0a6cb8"/><ellipse cx="11.2" cy="16.3" rx="1.59" ry="1.40" transform="rotate(25 11.2 16.3)" fill="#0b559c"/><ellipse cx="14.8" cy="16.7" rx="1.46" ry="1.30" transform="rotate(25 14.8 16.7)" fill="#083f80"/><ellipse cx="17.8" cy="17.0" rx="1.46" ry="1.30" transform="rotate(25 17.8 17.0)" fill="#ee2a0c"/><ellipse cx="3.45" cy="20.6" rx="2.13" ry="1.89" transform="rotate(25 3.45 20.6)" fill="#0d6db8"/><ellipse cx="8.2" cy="20.6" rx="1.89" ry="1.67" transform="rotate(25 8.2 20.6)" fill="#07559c"/><ellipse cx="12.2" cy="20.6" rx="1.71" ry="1.51" transform="rotate(25 12.2 20.6)" fill="#063f80"/><ellipse cx="16.0" cy="20.6" rx="1.59" ry="1.40" transform="rotate(25 16.0 20.6)" fill="#05377a"/><text transform="translate(19.7 6.9) scale(1.33 1)" font-family="Liberation Sans, sans-serif" font-style="italic" font-size="9.4" fill="#ee5a34" stroke="#ee5a34" stroke-width="0.15">Ymlxz.com</text><rect x="80.2" y="2.6" width="10.8" height="4.3" rx="0.8" fill="#ee5a34"/><text x="83.3" y="6" font-family="Liberation Sans, Noto Sans CJK SC, sans-serif" font-size="3.2" fill="#fff">官网</text><text x="20.6" y="21.3" font-family="Liberation Sans, Noto Sans CJK SC, sans-serif" font-weight="bold" font-size="14.1" fill="url(#wg)" stroke="url(#wg)" stroke-width="0.35">源码分享站</text></svg><svg class="wm" style="left:737.5px;top:294.5px" viewBox="0 0 94 26" width="94" height="26"><ellipse cx="5.6" cy="5.6" rx="1.22" ry="1.08" transform="rotate(25 5.6 5.6)" fill="#f4794f"/><ellipse cx="9.05" cy="6.4" rx="1.22" ry="1.08" transform="rotate(25 9.05 6.4)" fill="#f4794f"/><ellipse cx="11.9" cy="7.1" rx="1.22" ry="1.08" transform="rotate(25 11.9 7.1)" fill="#f47e58"/><ellipse cx="14.8" cy="7.9" rx="1.22" ry="1.08" transform="rotate(25 14.8 7.9)" fill="#f27049"/><ellipse cx="2.45" cy="7.9" rx="1.59" ry="1.40" transform="rotate(25 2.45 7.9)" fill="#3cb0ea"/><ellipse cx="6.4" cy="8.75" rx="1.59" ry="1.40" transform="rotate(25 6.4 8.75)" fill="#1e9be3"/><ellipse cx="9.55" cy="9.4" rx="1.40" ry="1.24" transform="rotate(25 9.55 9.4)" fill="#f04f22"/><ellipse cx="12.85" cy="10.1" rx="1.34" ry="1.19" transform="rotate(25 12.85 10.1)" fill="#ee4a1f"/><ellipse cx="15.8" cy="10.7" rx="1.28" ry="1.13" transform="rotate(25 15.8 10.7)" fill="#ee4a22"/><ellipse cx="2.6" cy="11.55" rx="1.77" ry="1.57" transform="rotate(25 2.6 11.55)" fill="#1f9be0"/><ellipse cx="6.9" cy="12.2" rx="1.65" ry="1.46" transform="rotate(25 6.9 12.2)" fill="#1585d0"/><ellipse cx="10.2" cy="12.7" rx="1.52" ry="1.35" transform="rotate(25 10.2 12.7)" fill="#ee3f17"/><ellipse cx="13.8" cy="13.2" rx="1.46" ry="1.30" transform="rotate(25 13.8 13.2)" fill="#ee3f17"/><ellipse cx="16.8" cy="13.7" rx="1.34" ry="1.19" transform="rotate(25 16.8 13.7)" fill="#ee4520"/><ellipse cx="3.1" cy="15.5" rx="1.95" ry="1.73" transform="rotate(25 3.1 15.5)" fill="#0f7fcf"/><ellipse cx="7.4" cy="16.0" rx="1.77" ry="1.57" transform="rotate(25 7.4 16.0)" fill="#0a6cb8"/><ellipse cx="11.2" cy="16.3" rx="1.59" ry="1.40" transform="rotate(25 11.2 16.3)" fill="#0b559c"/><ellipse cx="14.8" cy="16.7" rx="1.46" ry="1.30" transform="rotate(25 14.8 16.7)" fill="#083f80"/><ellipse cx="17.8" cy="17.0" rx="1.46" ry="1.30" transform="rotate(25 17.8 17.0)" fill="#ee2a0c"/><ellipse cx="3.45" cy="20.6" rx="2.13" ry="1.89" transform="rotate(25 3.45 20.6)" fill="#0d6db8"/><ellipse cx="8.2" cy="20.6" rx="1.89" ry="1.67" transform="rotate(25 8.2 20.6)" fill="#07559c"/><ellipse cx="12.2" cy="20.6" rx="1.71" ry="1.51" transform="rotate(25 12.2 20.6)" fill="#063f80"/><ellipse cx="16.0" cy="20.6" rx="1.59" ry="1.40" transform="rotate(25 16.0 20.6)" fill="#05377a"/><text transform="translate(19.7 6.9) scale(1.33 1)" font-family="Liberation Sans, sans-serif" font-style="italic" font-size="9.4" fill="#ee5a34" stroke="#ee5a34" stroke-width="0.15">Ymlxz.com</text><rect x="80.2" y="2.6" width="10.8" height="4.3" rx="0.8" fill="#ee5a34"/><text x="83.3" y="6" font-family="Liberation Sans, Noto Sans CJK SC, sans-serif" font-size="3.2" fill="#fff">官网</text><text x="20.6" y="21.3" font-family="Liberation Sans, Noto Sans CJK SC, sans-serif" font-weight="bold" font-size="14.1" fill="url(#wg)" stroke="url(#wg)" stroke-width="0.35">源码分享站</text></svg><svg class="wm" style="left:240.9px;top:526.9px" viewBox="0 0 94 26" width="94" height="26"><ellipse cx="5.6" cy="5.6" rx="1.22" ry="1.08" transform="rotate(25 5.6 5.6)" fill="#f4794f"/><ellipse cx="9.05" cy="6.4" rx="1.22" ry="1.08" transform="rotate(25 9.05 6.4)" fill="#f4794f"/><ellipse cx="11.9" cy="7.1" rx="1.22" ry="1.08" transform="rotate(25 11.9 7.1)" fill="#f47e58"/><ellipse cx="14.8" cy="7.9" rx="1.22" ry="1.08" transform="rotate(25 14.8 7.9)" fill="#f27049"/><ellipse cx="2.45" cy="7.9" rx="1.59" ry="1.40" transform="rotate(25 2.45 7.9)" fill="#3cb0ea"/><ellipse cx="6.4" cy="8.75" rx="1.59" ry="1.40" transform="rotate(25 6.4 8.75)" fill="#1e9be3"/><ellipse cx="9.55" cy="9.4" rx="1.40" ry="1.24" transform="rotate(25 9.55 9.4)" fill="#f04f22"/><ellipse cx="12.85" cy="10.1" rx="1.34" ry="1.19" transform="rotate(25 12.85 10.1)" fill="#ee4a1f"/><ellipse cx="15.8" cy="10.7" rx="1.28" ry="1.13" transform="rotate(25 15.8 10.7)" fill="#ee4a22"/><ellipse cx="2.6" cy="11.55" rx="1.77" ry="1.57" transform="rotate(25 2.6 11.55)" fill="#1f9be0"/><ellipse cx="6.9" cy="12.2" rx="1.65" ry="1.46" transform="rotate(25 6.9 12.2)" fill="#1585d0"/><ellipse cx="10.2" cy="12.7" rx="1.52" ry="1.35" transform="rotate(25 10.2 12.7)" fill="#ee3f17"/><ellipse cx="13.8" cy="13.2" rx="1.46" ry="1.30" transform="rotate(25 13.8 13.2)" fill="#ee3f17"/><ellipse cx="16.8" cy="13.7" rx="1.34" ry="1.19" transform="rotate(25 16.8 13.7)" fill="#ee4520"/><ellipse cx="3.1" cy="15.5" rx="1.95" ry="1.73" transform="rotate(25 3.1 15.5)" fill="#0f7fcf"/><ellipse cx="7.4" cy="16.0" rx="1.77" ry="1.57" transform="rotate(25 7.4 16.0)" fill="#0a6cb8"/><ellipse cx="11.2" cy="16.3" rx="1.59" ry="1.40" transform="rotate(25 11.2 16.3)" fill="#0b559c"/><ellipse cx="14.8" cy="16.7" rx="1.46" ry="1.30" transform="rotate(25 14.8 16.7)" fill="#083f80"/><ellipse cx="17.8" cy="17.0" rx="1.46" ry="1.30" transform="rotate(25 17.8 17.0)" fill="#ee2a0c"/><ellipse cx="3.45" cy="20.6" rx="2.13" ry="1.89" transform="rotate(25 3.45 20.6)" fill="#0d6db8"/><ellipse cx="8.2" cy="20.6" rx="1.89" ry="1.67" transform="rotate(25 8.2 20.6)" fill="#07559c"/><ellipse cx="12.2" cy="20.6" rx="1.71" ry="1.51" transform="rotate(25 12.2 20.6)" fill="#063f80"/><ellipse cx="16.0" cy="20.6" rx="1.59" ry="1.40" transform="rotate(25 16.0 20.6)" fill="#05377a"/><text transform="translate(19.7 6.9) scale(1.33 1)" font-family="Liberation Sans, sans-serif" font-style="italic" font-size="9.4" fill="#ee5a34" stroke="#ee5a34" stroke-width="0.15">Ymlxz.com</text><rect x="80.2" y="2.6" width="10.8" height="4.3" rx="0.8" fill="#ee5a34"/><text x="83.3" y="6" font-family="Liberation Sans, Noto Sans CJK SC, sans-serif" font-size="3.2" fill="#fff">官网</text><text x="20.6" y="21.3" font-family="Liberation Sans, Noto Sans CJK SC, sans-serif" font-weight="bold" font-size="14.1" fill="url(#wg)" stroke="url(#wg)" stroke-width="0.35">源码分享站</text></svg><svg class="wm" style="left:1001.2px;top:514.7px" viewBox="0 0 94 26" width="94" height="26"><ellipse cx="5.6" cy="5.6" rx="1.22" ry="1.08" transform="rotate(25 5.6 5.6)" fill="#f4794f"/><ellipse cx="9.05" cy="6.4" rx="1.22" ry="1.08" transform="rotate(25 9.05 6.4)" fill="#f4794f"/><ellipse cx="11.9" cy="7.1" rx="1.22" ry="1.08" transform="rotate(25 11.9 7.1)" fill="#f47e58"/><ellipse cx="14.8" cy="7.9" rx="1.22" ry="1.08" transform="rotate(25 14.8 7.9)" fill="#f27049"/><ellipse cx="2.45" cy="7.9" rx="1.59" ry="1.40" transform="rotate(25 2.45 7.9)" fill="#3cb0ea"/><ellipse cx="6.4" cy="8.75" rx="1.59" ry="1.40" transform="rotate(25 6.4 8.75)" fill="#1e9be3"/><ellipse cx="9.55" cy="9.4" rx="1.40" ry="1.24" transform="rotate(25 9.55 9.4)" fill="#f04f22"/><ellipse cx="12.85" cy="10.1" rx="1.34" ry="1.19" transform="rotate(25 12.85 10.1)" fill="#ee4a1f"/><ellipse cx="15.8" cy="10.7" rx="1.28" ry="1.13" transform="rotate(25 15.8 10.7)" fill="#ee4a22"/><ellipse cx="2.6" cy="11.55" rx="1.77" ry="1.57" transform="rotate(25 2.6 11.55)" fill="#1f9be0"/><ellipse cx="6.9" cy="12.2" rx="1.65" ry="1.46" transform="rotate(25 6.9 12.2)" fill="#1585d0"/><ellipse cx="10.2" cy="12.7" rx="1.52" ry="1.35" transform="rotate(25 10.2 12.7)" fill="#ee3f17"/><ellipse cx="13.8" cy="13.2" rx="1.46" ry="1.30" transform="rotate(25 13.8 13.2)" fill="#ee3f17"/><ellipse cx="16.8" cy="13.7" rx="1.34" ry="1.19" transform="rotate(25 16.8 13.7)" fill="#ee4520"/><ellipse cx="3.1" cy="15.5" rx="1.95" ry="1.73" transform="rotate(25 3.1 15.5)" fill="#0f7fcf"/><ellipse cx="7.4" cy="16.0" rx="1.77" ry="1.57" transform="rotate(25 7.4 16.0)" fill="#0a6cb8"/><ellipse cx="11.2" cy="16.3" rx="1.59" ry="1.40" transform="rotate(25 11.2 16.3)" fill="#0b559c"/><ellipse cx="14.8" cy="16.7" rx="1.46" ry="1.30" transform="rotate(25 14.8 16.7)" fill="#083f80"/><ellipse cx="17.8" cy="17.0" rx="1.46" ry="1.30" transform="rotate(25 17.8 17.0)" fill="#ee2a0c"/><ellipse cx="3.45" cy="20.6" rx="2.13" ry="1.89" transform="rotate(25 3.45 20.6)" fill="#0d6db8"/><ellipse cx="8.2" cy="20.6" rx="1.89" ry="1.67" transform="rotate(25 8.2 20.6)" fill="#07559c"/><ellipse cx="12.2" cy="20.6" rx="1.71" ry="1.51" transform="rotate(25 12.2 20.6)" fill="#063f80"/><ellipse cx="16.0" cy="20.6" rx="1.59" ry="1.40" transform="rotate(25 16.0 20.6)" fill="#05377a"/><text transform="translate(19.7 6.9) scale(1.33 1)" font-family="Liberation Sans, sans-serif" font-style="italic" font-size="9.4" fill="#ee5a34" stroke="#ee5a34" stroke-width="0.15">Ymlxz.com</text><rect x="80.2" y="2.6" width="10.8" height="4.3" rx="0.8" fill="#ee5a34"/><text x="83.3" y="6" font-family="Liberation Sans, Noto Sans CJK SC, sans-serif" font-size="3.2" fill="#fff">官网</text><text x="20.6" y="21.3" font-family="Liberation Sans, Noto Sans CJK SC, sans-serif" font-weight="bold" font-size="14.1" fill="url(#wg)" stroke="url(#wg)" stroke-width="0.35">源码分享站</text></svg></body></html>
